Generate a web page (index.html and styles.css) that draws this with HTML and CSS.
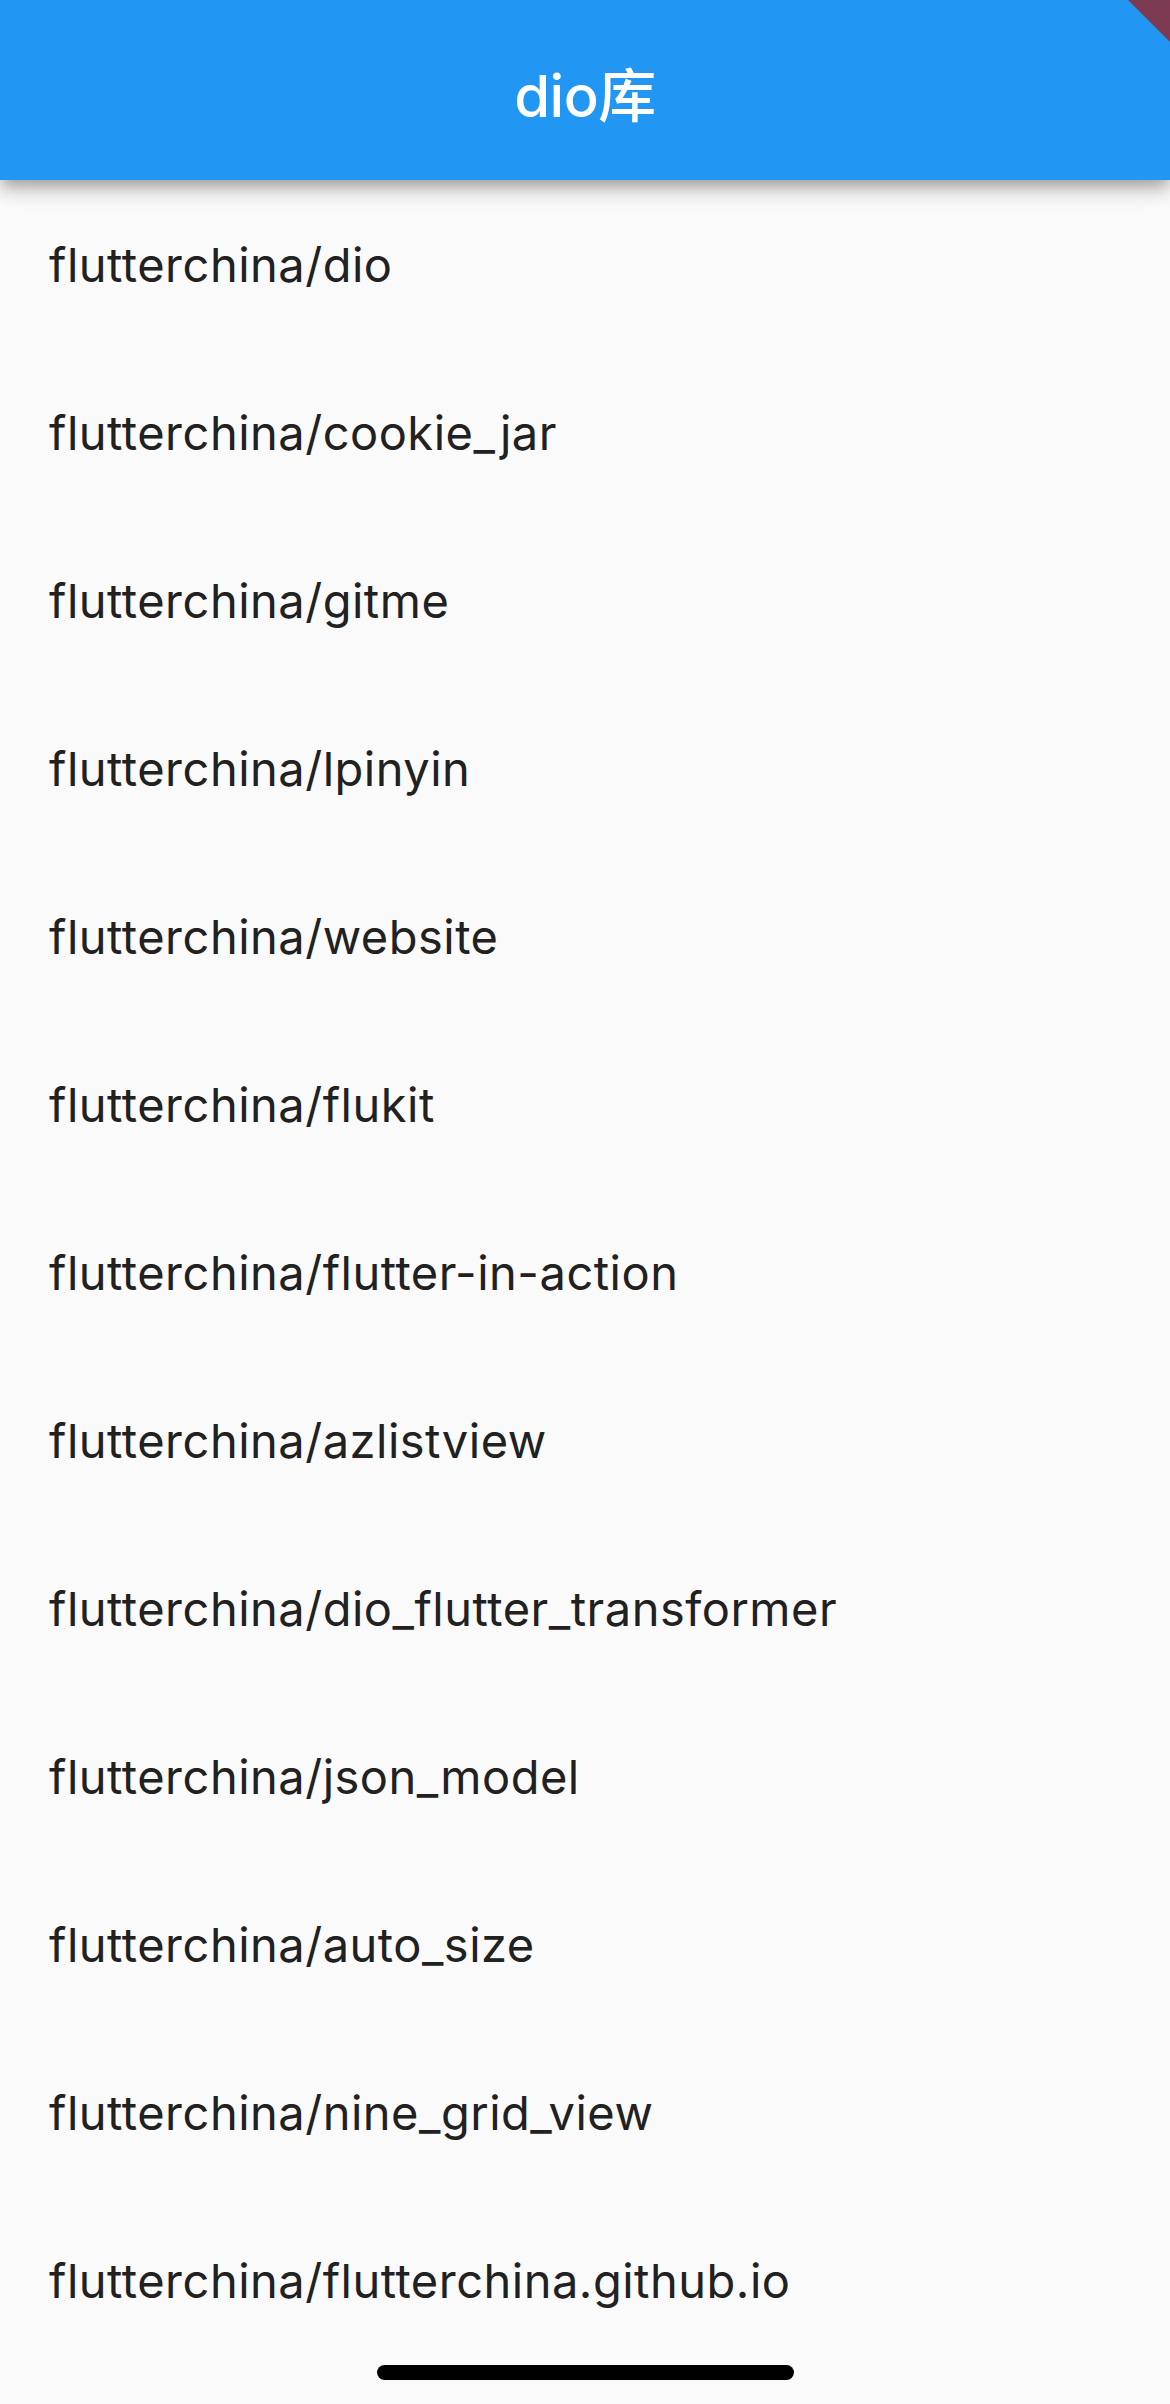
FILE: index.html
```html
<!DOCTYPE html>
<html>
<head>
<meta charset="utf-8">
<link rel="stylesheet" href="styles.css">
</head>
<body>
<div class="screen">
  <header class="appbar"><h1 class="title">dio库</h1></header>
  <ul class="list">
    <li class="tile">flutterchina/dio</li>
    <li class="tile">flutterchina/cookie_jar</li>
    <li class="tile">flutterchina/gitme</li>
    <li class="tile">flutterchina/lpinyin</li>
    <li class="tile">flutterchina/website</li>
    <li class="tile">flutterchina/flukit</li>
    <li class="tile">flutterchina/flutter-in-action</li>
    <li class="tile">flutterchina/azlistview</li>
    <li class="tile">flutterchina/dio_flutter_transformer</li>
    <li class="tile">flutterchina/json_model</li>
    <li class="tile">flutterchina/auto_size</li>
    <li class="tile">flutterchina/nine_grid_view</li>
    <li class="tile">flutterchina/flutterchina.github.io</li>
  </ul>
  <div class="debug-banner"></div>
  <div class="home-indicator"></div>
</div>
</body>
</html>
```
FILE: styles.css
```css
html, body {
  margin: 0;
  padding: 0;
  background: #fafafa;
}
.screen {
  position: relative;
  width: 1170px;
  height: 2404px;
  overflow: hidden;
  background: #fafafa;
  font-family: Inter, "Noto Sans", "Noto Sans CJK SC", sans-serif;
}
.appbar {
  position: relative;
  z-index: 2;
  height: 180px;
  background: #2196f3;
  display: flex;
  align-items: center;
  justify-content: center;
  box-shadow: 0 6px 12px -3px rgba(0,0,0,0.2), 0 12px 15px rgba(0,0,0,0.14), 0 3px 30px rgba(0,0,0,0.12);
}
.title {
  margin: 0;
  padding-top: 4px;
  color: #ffffff;
  font-size: 58px;
  font-weight: 500;
  font-family: Inter, "Noto Sans CJK SC", sans-serif;
  letter-spacing: -0.5px;
}
.list {
  list-style: none;
  margin: 0;
  padding: 0;
}
.tile {
  height: 168px;
  display: flex;
  align-items: center;
  padding-left: 49px;
  font-size: 47px;
  color: #212121;
  letter-spacing: 0.5px;
}
.debug-banner {
  position: absolute;
  top: 0;
  right: 0;
  width: 42px;
  height: 42px;
  background: #7c3a52;
  clip-path: polygon(0 0, 100% 0, 100% 100%);
  z-index: 3;
}
.home-indicator {
  position: absolute;
  left: 377px;
  bottom: 24px;
  width: 417px;
  height: 15px;
  border-radius: 8px;
  background: #000;
}
```
